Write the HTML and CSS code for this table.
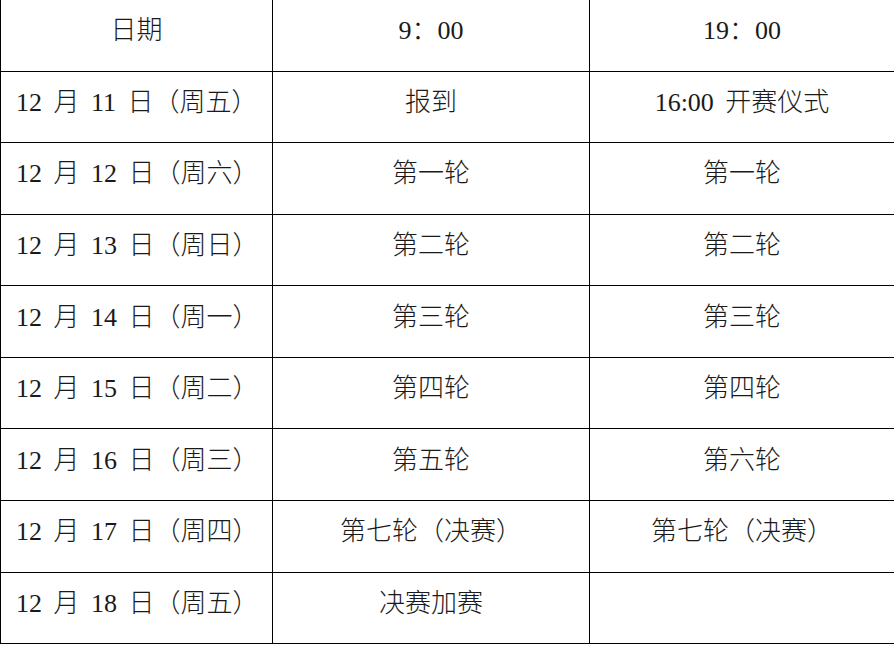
FILE: index.html
```html
<!DOCTYPE html>
<html lang="zh-CN">
<head>
<meta charset="utf-8">
<title>赛程</title>
<link rel="stylesheet" href="styles.css">
</head>
<body>
<table class="schedule">
  <colgroup>
    <col class="c-date">
    <col class="c-am">
    <col class="c-pm">
  </colgroup>
  <tr class="head">
    <td class="center">日期</td>
    <td class="center">9：00</td>
    <td class="center">19：00</td>
  </tr>
  <tr>
    <td class="date">12 月 11 日（周五）</td>
    <td class="center">报到</td>
    <td class="center">16:00 开赛仪式</td>
  </tr>
  <tr>
    <td class="date">12 月 12 日（周六）</td>
    <td class="center">第一轮</td>
    <td class="center">第一轮</td>
  </tr>
  <tr>
    <td class="date">12 月 13 日（周日）</td>
    <td class="center">第二轮</td>
    <td class="center">第二轮</td>
  </tr>
  <tr>
    <td class="date">12 月 14 日（周一）</td>
    <td class="center">第三轮</td>
    <td class="center">第三轮</td>
  </tr>
  <tr>
    <td class="date">12 月 15 日（周二）</td>
    <td class="center">第四轮</td>
    <td class="center">第四轮</td>
  </tr>
  <tr>
    <td class="date">12 月 16 日（周三）</td>
    <td class="center">第五轮</td>
    <td class="center">第六轮</td>
  </tr>
  <tr>
    <td class="date">12 月 17 日（周四）</td>
    <td class="center">第七轮（决赛）</td>
    <td class="center">第七轮（决赛）</td>
  </tr>
  <tr>
    <td class="date">12 月 18 日（周五）</td>
    <td class="center">决赛加赛</td>
    <td class="center"></td>
  </tr>
</table>
</body>
</html>
```

FILE: styles.css
```css
html, body {
  margin: 0;
  padding: 0;
  background: #ffffff;
}

.schedule {
  width: 894px;
  border-collapse: collapse;
  table-layout: fixed;
  font-family: "Liberation Serif", "Noto Sans CJK SC", serif;
  font-size: 26px;
  font-weight: 300;
  color: #1a1a1a;
  word-spacing: 5px;
  text-spacing-trim: space-all;
}

.c-date { width: 272px; }
.c-am { width: 317px; }
.c-pm { width: 305px; }

.schedule tr {
  height: 71.6px;
}

.schedule tr.head {
  height: 71px;
}

.schedule td {
  border: 1px solid #000000;
  padding: 0 0 8px 0;
  vertical-align: middle;
  white-space: nowrap;
  line-height: 1;
}

.schedule tr.head td {
  border-top: none;
}

.schedule td.center {
  text-align: center;
}

.schedule td.date {
  text-align: left;
  padding-left: 15px;
}
```
